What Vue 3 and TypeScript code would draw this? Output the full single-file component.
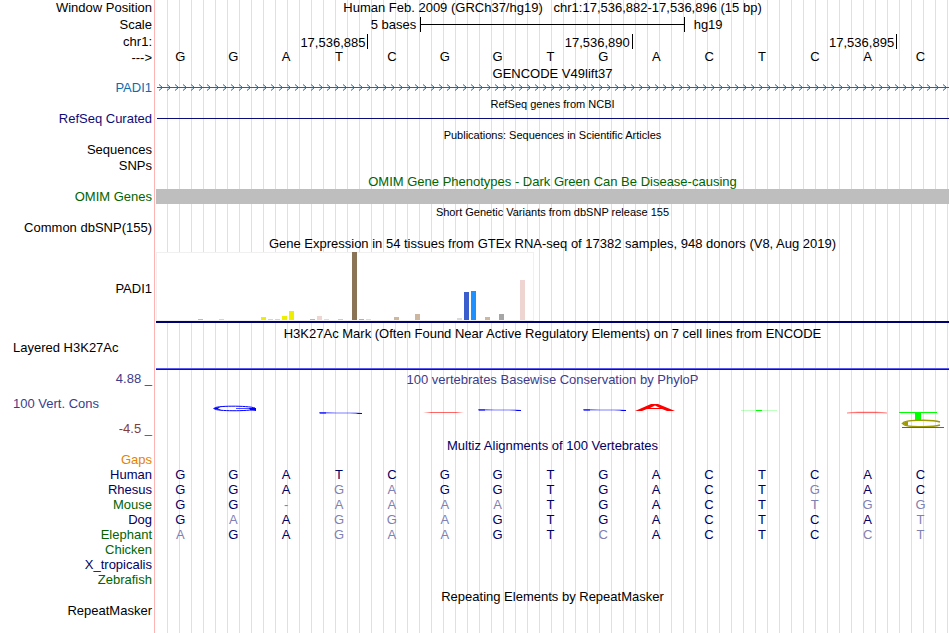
<script setup lang="ts">
interface Bar {
  index: number
  height: number
  color: string
}

interface Species {
  name: string
  tone: 'navy' | 'green' | 'orange'
  bases: string
}

const heading = 'Human Feb. 2009 (GRCh37/hg19)   chr1:17,536,882-17,536,896 (15 bp)'
const reference = 'GGATCGGTGACTCAC'
const positions = ['17,536,885', '17,536,890', '17,536,895']

const tissues: Bar[] = [
  { index: 6, height: 1, color: '#cdb79e' },
  { index: 9, height: 1, color: '#eeee00' },
  { index: 15, height: 3, color: '#eeee00' },
  { index: 16, height: 1, color: '#eeee00' },
  { index: 17, height: 1, color: '#eeee00' },
  { index: 18, height: 4, color: '#eeee00' },
  { index: 19, height: 9, color: '#eeee00' },
  { index: 22, height: 1, color: '#9ac0cd' },
  { index: 23, height: 4, color: '#eed5d2' },
  { index: 24, height: 1, color: '#eed5d2' },
  { index: 26, height: 1, color: '#eec591' },
  { index: 28, height: 68, color: '#8b7355' },
  { index: 29, height: 1, color: '#cdaa7d' },
  { index: 30, height: 1, color: '#eed5d2' },
  { index: 34, height: 3, color: '#cdb79e' },
  { index: 37, height: 6, color: '#cdb79e' },
  { index: 43, height: 2, color: '#d9d9d9' },
  { index: 44, height: 28, color: '#3a5fcd' },
  { index: 45, height: 29, color: '#1e90ff' },
  { index: 47, height: 3, color: '#cdb79e' },
  { index: 49, height: 6, color: '#a6a6a6' },
  { index: 52, height: 40, color: '#eed5d2' },
]

const alignment: Species[] = [
  { name: 'Gaps', tone: 'orange', bases: '' },
  { name: 'Human', tone: 'navy', bases: 'GGATCGGTGACTCAC' },
  { name: 'Rhesus', tone: 'navy', bases: 'GGAGAGGTGACTGAC' },
  { name: 'Mouse', tone: 'green', bases: 'GG-AAAATGACTTGG' },
  { name: 'Dog', tone: 'navy', bases: 'GAAGGAGTGACTCAT' },
  { name: 'Elephant', tone: 'green', bases: 'AGAGAAGTCACTCCT' },
  { name: 'Chicken', tone: 'green', bases: '' },
  { name: 'X_tropicalis', tone: 'navy', bases: '' },
  { name: 'Zebrafish', tone: 'green', bases: '' },
]

const cells = (bases: string): string[] => bases.padEnd(reference.length).split('')

// Bases that do not match the human sequence are drawn faded.
const differs = (base: string, column: number): boolean => base !== reference[column]
</script>

<template>
  <main class="browser">
    <header class="ruler">
      <div class="row">
        <div class="label">Window Position</div>
        <h1 class="title">{{ heading }}</h1>
      </div>
      <div class="row tall">
        <div class="label">Scale</div>
        <div class="scale">
          <span class="scale-size">5 bases</span>
          <span class="scale-bar"></span>
          <span class="scale-name">hg19</span>
        </div>
      </div>
      <div class="row tall">
        <div class="label">chr1:</div>
        <div class="ticks">
          <span v-for="position in positions" :key="position" class="tick">{{ position }}</span>
        </div>
      </div>
      <div class="row">
        <div class="label">---&gt;</div>
        <div class="bases raised">
          <span v-for="(base, i) in cells(reference)" :key="i">{{ base }}</span>
        </div>
      </div>
    </header>

    <section class="track">
      <h2 class="title">GENCODE V49lift37</h2>
      <div class="row">
        <div class="label raised gene">PADI1</div>
        <svg class="strand" width="100%" height="15" aria-hidden="true">
          <defs>
            <pattern id="chevrons" x="1" width="8" height="15" patternUnits="userSpaceOnUse">
              <path d="M2 3.5 L5.5 6.5 L2 9.5" fill="none" stroke="#0c6cae" stroke-width="1" />
            </pattern>
          </defs>
          <rect x="1" y="6" width="100%" height="1" fill="#0c6cae" />
          <rect x="1" y="0" width="100%" height="15" fill="url(#chevrons)" />
        </svg>
      </div>
    </section>

    <section class="track">
      <h2 class="title small">RefSeq genes from NCBI</h2>
      <div class="row">
        <div class="label raised refseq">RefSeq Curated</div>
        <div class="intron"></div>
      </div>
    </section>

    <section class="track">
      <h2 class="title small">Publications: Sequences in Scientific Articles</h2>
      <div class="row"><div class="label raised">Sequences</div></div>
      <div class="row"><div class="label">SNPs</div></div>
    </section>

    <section class="track">
      <h2 class="title green">OMIM Gene Phenotypes - Dark Green Can Be Disease-causing</h2>
      <div class="row">
        <div class="label green">OMIM Genes</div>
        <div class="omim"></div>
      </div>
    </section>

    <section class="track">
      <h2 class="title small">Short Genetic Variants from dbSNP release 155</h2>
      <div class="row"><div class="label">Common dbSNP(155)</div></div>
    </section>

    <section class="track">
      <h2 class="title">Gene Expression in 54 tissues from GTEx RNA-seq of 17382 samples, 948 donors (V8, Aug 2019)</h2>
      <div class="row expression">
        <div class="label">PADI1</div>
        <div class="plot">
          <svg width="378" height="69" aria-hidden="true">
            <rect x="0.5" y="0.5" width="377" height="68" fill="#fff" stroke="#f0f0f0" />
            <rect
              v-for="bar in tissues"
              :key="bar.index"
              :x="bar.index * 7"
              :y="68 - bar.height"
              width="5"
              :height="bar.height"
              :fill="bar.color"
            />
          </svg>
        </div>
      </div>
    </section>

    <section class="track">
      <h2 class="title">H3K27Ac Mark (Often Found Near Active Regulatory Elements) on 7 cell lines from ENCODE</h2>
      <div class="row signal">
        <div class="label raised start">Layered H3K27Ac</div>
        <div class="signal-line"></div>
      </div>
    </section>

    <section class="track conservation">
      <div class="row">
        <div class="label blue">4.88 _</div>
        <h2 class="title blue">100 vertebrates Basewise Conservation by PhyloP</h2>
      </div>
      <div class="row">
        <div class="axis">
          <div class="label start blue">100 Vert. Cons</div>
          <div class="label raised maroon">-4.5 _</div>
        </div>
        <svg class="scores" viewBox="0 0 793 50" preserveAspectRatio="none" aria-hidden="true">
          <g fill="none" stroke="#0000ff">
            <path d="M99 21 C92 18.500 58 18.500 58 21.500 C58 24 86 24.500 99 22.500" />
            <path d="M80 21.500 H98" stroke-width="0.700" />
          </g>
          <path d="M57 21.500 L65 19.500 L62 21.500 L66 23.500 Z M93 21 H100 V24 L94 23 Z" fill="#0000ff" />
          <g fill="#0000ff">
            <path d="M163 25 H171 L180 25.500 H200 L206 26 V27 H200 L194 26.500 H163 Z" opacity="0.500" />
            <path d="M200 26 H206 V27 H202 Z M164 25.500 H170 V26.500 H164 Z" />
            <path d="M322 22 H330 L339 22.500 H359 L365 23 V24 H359 L353 23.500 H322 Z" opacity="0.500" />
            <path d="M359 23 H365 V24 H361 Z M323 22.500 H329 V23.500 H323 Z" />
            <path d="M427 22 H435 L444 22.500 H464 L470 23 V24 H464 L458 23.500 H427 Z" opacity="0.500" />
            <path d="M464 23 H470 V24 H466 Z M428 22.500 H434 V23.500 H428 Z" />
          </g>
          <g fill="#ff0000">
            <path d="M267 25.500 L275 25 H300 L308 25.500 L300 26 H275 Z" opacity="0.600" />
            <path d="M479 24 L495 17 H502 L519 24 H511 L506 22 H491 L486 24 Z M494 21 H504 L499 18.500 Z" fill-rule="evenodd" />
            <path d="M691 26 L702 25 H720 L731 26 L720 25.800 H702 Z" stroke="#ff0000" stroke-width="0.400" opacity="0.700" />
          </g>
          <g fill="#00ff00">
            <rect x="585" y="23" width="36" height="1" opacity="0.250" />
            <rect x="600" y="23" width="6" height="1" />
            <rect x="743" y="25" width="38" height="1" />
            <rect x="759" y="25" width="6" height="8" />
          </g>
          <path d="M784 35 C777 32.500 747 32.500 747 36.500 C747 40.500 777 40.500 784 38" fill="none" stroke="#a09b00" stroke-width="1.500" />
          <path d="M745 36.500 L752 34 V39 Z" fill="#a09b00" />
          <rect x="746" y="40" width="42" height="1" fill="#5050e6" />
        </svg>
      </div>
    </section>

    <section class="track">
      <h2 class="title navy">Multiz Alignments of 100 Vertebrates</h2>
      <div class="alignment">
        <table>
          <tbody>
            <tr v-for="species in alignment" :key="species.name">
              <th scope="row" :class="species.tone">{{ species.name }}</th>
              <td v-for="(base, i) in cells(species.bases)" :key="i" :class="{ faded: differs(base, i) }">{{ base }}</td>
            </tr>
          </tbody>
        </table>
      </div>
    </section>

    <section class="track">
      <h2 class="title">Repeating Elements by RepeatMasker</h2>
      <div class="row"><div class="label raised">RepeatMasker</div></div>
    </section>
  </main>
</template>

<style>
body {
  margin: 0;
}
</style>

<style scoped>
.browser {
  box-sizing: border-box;
  min-height: 100vh;
  padding-right: 1px;
  font: 13px/15px "Liberation Sans", Arial, sans-serif;
  color: #000;
  background-color: #fff;
  background-image:
    linear-gradient(#ffb4b4, #ffb4b4),
    linear-gradient(#fff, #fff),
    linear-gradient(to right, #dcdcff 1px, transparent 1px);
  background-size: 1px 100%, 167px 100%, 12px 100%;
  background-position: 154px 0, 0 0, 11px 0;
  background-repeat: no-repeat, no-repeat, repeat-x;
}

.row {
  display: grid;
  grid-template-columns: 156px minmax(0, 1fr);
  min-height: 15px;
}

.tall {
  min-height: 17px;
  line-height: 17px;
}

.label {
  padding-right: 4px;
  text-align: right;
  white-space: nowrap;
}

.start {
  padding-left: 13px;
  text-align: left;
}

.raised {
  line-height: 13px;
}

.title {
  margin: 0;
  font-size: 13px;
  font-weight: normal;
  line-height: 16px;
  text-align: center;
  white-space: pre;
}

.track .title {
  padding-top: 2px;
  line-height: 14px;
}

.track > .title {
  padding-left: 156px;
}

.track .small {
  padding-top: 0;
  font-size: 11px;
  line-height: 16px;
}

.gene {
  color: #0c6cae;
}

.refseq {
  color: #0c0c78;
}

.green {
  color: #006400;
}

.navy {
  color: #000064;
}

.orange {
  color: #e68200;
}

.blue {
  color: #3c3c8c;
}

.maroon {
  color: #823c3c;
}

.scale {
  display: grid;
  grid-template-columns: repeat(3, minmax(0, 1fr));
}

.scale-size {
  padding-right: 4px;
  text-align: right;
}

.scale-bar {
  height: 15px;
  margin-top: 1px;
  border: solid #000;
  border-width: 0 1px;
  background: linear-gradient(#000, #000) 0 7px / 100% 1px no-repeat;
}

.scale-name {
  padding-left: 9px;
}

.ticks {
  display: grid;
  grid-template-columns: 4fr 5fr 5fr 1fr;
  margin: 1px -1px 0 1px;
}

.tick {
  height: 15px;
  padding-right: 2px;
  border-right: 1px solid #000;
  text-align: right;
}

.bases {
  display: grid;
  grid-template-columns: repeat(15, minmax(0, 1fr));
  margin: 0 2px 0 -2px;
  text-align: center;
}

.strand {
  display: block;
}

.intron {
  height: 1px;
  margin: 6px 0 0 1px;
  background: #0c0c78;
}

.omim {
  background: #bebebe;
}

.expression {
  min-height: 74px;
}

.expression .label {
  align-self: center;
}

.plot {
  align-self: start;
  padding-top: 1px;
  border-bottom: 2px solid #00006e;
}

.plot svg {
  display: block;
}

.signal {
  min-height: 29px;
}

.signal-line {
  align-self: end;
  height: 1px;
  border-top: 1px solid #5a5af0;
  background: #14147d;
}

.conservation {
  padding-top: 1px;
}

.axis {
  display: flex;
  flex-direction: column;
  justify-content: space-between;
  padding: 9px 0 2px;
}

.scores {
  display: block;
  width: 100%;
  height: 50px;
}

.alignment {
  padding-right: 2px;
}

table {
  width: 100%;
  table-layout: fixed;
  border-collapse: collapse;
}

th,
td {
  height: 15px;
  padding: 0;
  font-weight: normal;
  line-height: 13px;
  vertical-align: top;
}

th {
  width: 152px;
  padding-right: 2px;
  text-align: right;
}

td {
  color: #000064;
  text-align: center;
}

.faded {
  color: #8080b2;
}
</style>
